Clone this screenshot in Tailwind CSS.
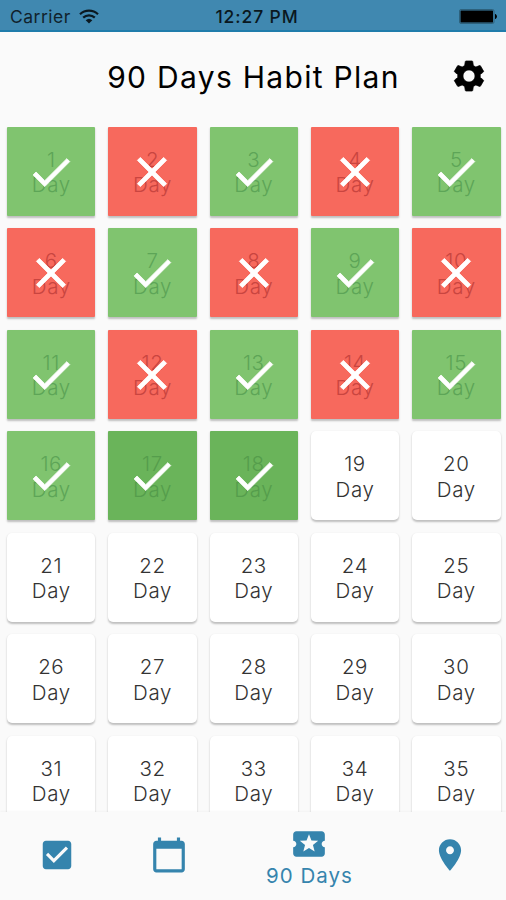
<!DOCTYPE html>
<html lang="en">
<head>
    <meta charset="UTF-8">
    <meta name="viewport" content="width=device-width, initial-scale=1.0">
    <title>90 Days Habit Plan</title>
    <!-- Tailwind CSS CDN -->
    <script src="https://cdn.jsdelivr.net/npm/@tailwindcss/browser@4"></script>
</head>
<body class="bg-[#fafafa] font-['Inter',sans-serif]">
    <div class="flex h-[900px] w-[506px] flex-col overflow-hidden">

        <!-- Status bar -->
        <div class="grid h-8 shrink-0 grid-cols-3 items-center border-b-2 border-[#1f7cab] bg-[#4088b0] pt-[3px] pr-[9px] pl-2.5 text-black">
            <div class="flex items-center gap-2">
                <span class="text-[17.5px] leading-none tracking-[0.5px] text-[#10222c]">Carrier</span>
                <svg class="h-[15px] w-5" viewBox="0 0 20 15" fill="none" stroke="#0a1820" stroke-width="2.2">
                    <path d="M1 5.2a13 13 0 0 1 18 0M4.2 8.6a8.4 8.4 0 0 1 11.6 0" />
                    <path d="M10 14.6 6.7 11.2a4.8 4.8 0 0 1 6.6 0z" fill="#0a1820" stroke="none" />
                </svg>
            </div>
            <span class="justify-self-center whitespace-nowrap pl-[7px] text-[17.5px] leading-none font-medium tracking-[0.9px] text-[#0a1820]">12:27 PM</span>
            <svg class="h-[15px] w-[38px] justify-self-end" viewBox="0 0 38 15">
                <rect x=".5" y=".5" width="34.5" height="14" rx="1.5" fill="none" stroke="#2d617c" />
                <rect x="1.5" y="1.5" width="32.5" height="12" rx=".5" fill="#000" />
                <path d="M36 5c2.6.4 2.6 4.6 0 5z" fill="#000" />
            </svg>
        </div>

        <!-- Header -->
        <header class="grid h-[95px] shrink-0 grid-cols-[1fr_auto_1fr] items-start pt-[25px]">
            <h1 class="col-start-2 pl-px text-[30px] leading-10 tracking-[1.3px] text-black">90 Days Habit Plan</h1>
            <button class="mt-px mr-[19px] justify-self-end" aria-label="Settings">
                <svg class="size-9" viewBox="0 0 24 24" stroke="#000" stroke-width=".5" stroke-linejoin="round">
                    <path d="M19.43 12.98c.04-.32.07-.64.07-.98s-.03-.66-.07-.98l2.11-1.65c.19-.15.24-.42.12-.64l-2-3.46c-.12-.22-.39-.3-.61-.22l-2.49 1c-.52-.4-1.08-.73-1.69-.98l-.38-2.65C14.46 2.18 14.25 2 14 2h-4c-.25 0-.46.18-.49.42l-.38 2.65c-.61.25-1.17.59-1.69.98l-2.49-1c-.23-.09-.49 0-.61.22l-2 3.46c-.13.22-.07.49.12.64l2.11 1.65c-.04.32-.07.65-.07.98s.03.66.07.98l-2.11 1.65c-.19.15-.24.42-.12.64l2 3.46c.12.22.39.3.61.22l2.49-1c.52.4 1.08.73 1.69.98l.38 2.65c.03.24.24.42.49.42h4c.25 0 .46-.18.49-.42l.38-2.65c.61-.25 1.17-.59 1.69-.98l2.49 1c.23.09.49 0 .61-.22l2-3.46c.12-.22.07-.49-.12-.64l-2.11-1.65zM12 16c-2.2 0-4-1.8-4-4s1.8-4 4-4 4 1.8 4 4-1.8 4-4 4z" />
                </svg>
            </button>
        </header>

        <!-- Days -->
        <main class="min-h-0 flex-1 overflow-hidden">
            <div id="days" class="grid auto-rows-[88.7px] grid-cols-5 gap-[12.8px] pr-[5.5px] pl-[7px]"></div>
        </main>

        <!-- Bottom navigation -->
        <nav class="z-10 grid h-[88px] shrink-0 grid-cols-[113px_112px_169px_112px] items-center justify-items-center bg-[#fafafa] text-[#3584ad] shadow-[0_-1px_2px_rgba(0,0,0,0.03)]">
            <a href="#" class="-mt-[3px]" aria-label="Today">
                <svg class="size-[38px]" viewBox="0 0 24 24" fill="currentColor">
                    <path d="M19 3H5c-1.11 0-2 .9-2 2v14c0 1.1.89 2 2 2h14c1.11 0 2-.9 2-2V5c0-1.1-.89-2-2-2zm-9 14-5-5 1.41-1.41L10 14.17l7.59-7.59L19 8l-9 9z" />
                </svg>
            </a>
            <a href="#" class="-mt-[3px]" aria-label="Calendar">
                <svg class="size-[38px]" viewBox="0 0 24 24" fill="currentColor">
                    <path d="M20 3h-1V1h-2v2H7V1H5v2H4c-1.1 0-2 .9-2 2v16c0 1.1.9 2 2 2h16c1.1 0 2-.9 2-2V5c0-1.1-.9-2-2-2zm0 18H4V8h16v13z" />
                </svg>
            </a>
            <a href="#" class="flex flex-col items-center pt-0.5">
                <svg class="size-[38px]" viewBox="0 0 24 24" fill="currentColor">
                    <path d="M20 12c0-1.1.9-2 2-2V6c0-1.1-.9-2-2-2H4c-1.1 0-1.99.9-1.99 2v4c1.1 0 1.99.9 1.99 2s-.89 2-2 2v4c0 1.1.9 2 2 2h16c1.1 0 2-.9 2-2v-4c-1.1 0-2-.9-2-2zm-4.42 4.8L12 14.5l-3.58 2.3 1.08-4.12-3.29-2.69 4.24-.25L12 5.8l1.54 3.95 4.24.25-3.29 2.69 1.09 4.11z" />
                </svg>
                <span class="text-[20.5px] leading-[26px] tracking-[1px]">90 Days</span>
            </a>
            <a href="#" class="-mt-[3px]" aria-label="Places">
                <svg class="size-[38px]" viewBox="0 0 24 24" fill="currentColor">
                    <path d="M12 2C8.13 2 5 5.13 5 9c0 5.25 7 13 7 13s7-7.75 7-13c0-3.87-3.13-7-7-7zm0 9.5c-1.38 0-2.5-1.12-2.5-2.5s1.12-2.5 2.5-2.5 2.5 1.12 2.5 2.5-1.12 2.5-2.5 2.5z" />
                </svg>
            </a>
        </nav>
    </div>

    <script>
        const daysElement = document.getElementById('days');
        const missedDays = [2, 4, 6, 8, 10, 12, 14];
        const lastMarkedDay = 18;

        const checkPath = 'M9 16.17 4.83 12l-1.42 1.41L9 19 21 7l-1.41-1.41z';
        const crossPath = 'M19 6.41 17.59 5 12 10.59 6.41 5 5 6.41 10.59 12 5 17.59 6.41 19 12 13.41 17.59 19 19 17.59 13.41 12z';

        const cardStyles = {
            open: 'rounded-[5px] bg-white text-[#333]',
            done: 'rounded-[1px] bg-[#80c46f] text-[#5da557]',
            recent: 'rounded-[1px] bg-[#6ab45a] text-[#559d4c]',
            missed: 'rounded-[1px] bg-[#f7695d] text-[#c94540]'
        };

        function getStatus(day) {
            if (day > lastMarkedDay) return 'open';
            if (missedDays.includes(day)) return 'missed';
            return day > 16 ? 'recent' : 'done';
        }

        for (let day = 1; day <= 35; day++) {
            const status = getStatus(day);
            const icon = status === 'open' ? '' : `
                <svg class="absolute inset-0 top-px m-auto size-[50px]" viewBox="0 0 24 24" fill="#fff" stroke="#fff" stroke-width=".4">
                    <path d="${status === 'missed' ? crossPath : checkPath}" />
                </svg>`;

            daysElement.innerHTML += `
                <div class="relative flex flex-col items-center justify-center pt-0.5 text-[20.5px] leading-[25.5px] font-light tracking-[0.6px] shadow-[0_1.5px_2px_rgba(0,0,0,0.24)] ${cardStyles[status]}">
                    <span>${day}</span>
                    <span>Day</span>
                    ${icon}
                </div>`;
        }
    </script>
</body>
</html>
